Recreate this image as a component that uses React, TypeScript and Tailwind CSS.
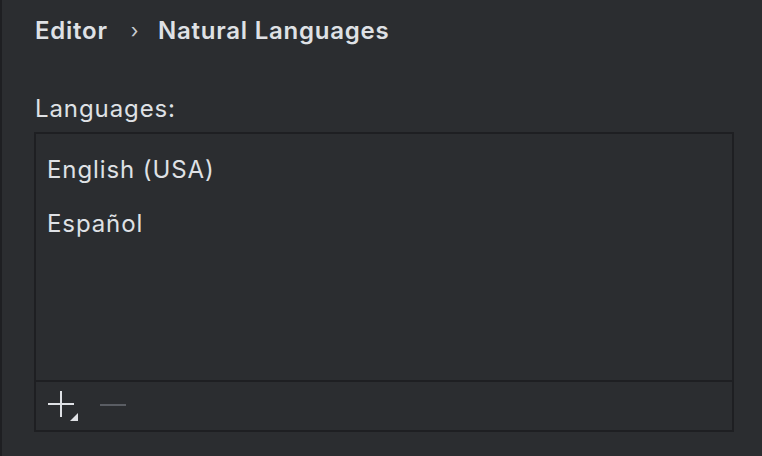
import React from "react";

export default function App() {
  return (
    <div
      className="w-[762px] h-[456px] bg-[#2b2d30] border-l-2 border-[#1e1f22] text-[#dfe1e5] overflow-hidden"
      style={{ fontFamily: "Inter, 'Noto Sans', sans-serif" }}
    >
      <div className="pl-[32px] pr-[26px] pt-[17px]">
        <div className="flex items-center h-[28px] text-[24px] font-semibold leading-[28px] tracking-[0.75px]">
          <span className="pl-[1px]">Editor</span>
          <span className="ml-[23px] mr-[19px] text-[20px] font-normal text-[#c9ccd1]">›</span>
          <span>Natural Languages</span>
        </div>
        <div className="mt-[50px] h-[28px] leading-[28px] text-[24px] tracking-[0.9px] pl-[1px]">Languages:</div>
        <div className="mt-[9px] w-[700px] h-[300px] border-2 border-[#1e1f22] flex flex-col">
          <div className="h-[246px] pt-[9px] text-[24px] tracking-[0.9px] px-[11px]">
            <div className="h-[54px] flex items-center">English (USA)</div>
            <div className="h-[54px] flex items-center">Español</div>
          </div>
          <div className="h-[48px] border-t-2 border-[#1e1f22] flex items-center pl-[12px]">
            <svg width="32" height="32" viewBox="0 0 32 32" className="block">
              <rect x="12" y="2" width="2" height="26" fill="#dfe1e5" />
              <rect x="0" y="14" width="26" height="2" fill="#dfe1e5" />
              <polygon points="30,24 30,32 22,32" fill="#dfe1e5" />
            </svg>
            <div className="ml-[20px] w-[26px] h-[2px] bg-[#5a5d63]" />
          </div>
        </div>
      </div>
    </div>
  );
}
